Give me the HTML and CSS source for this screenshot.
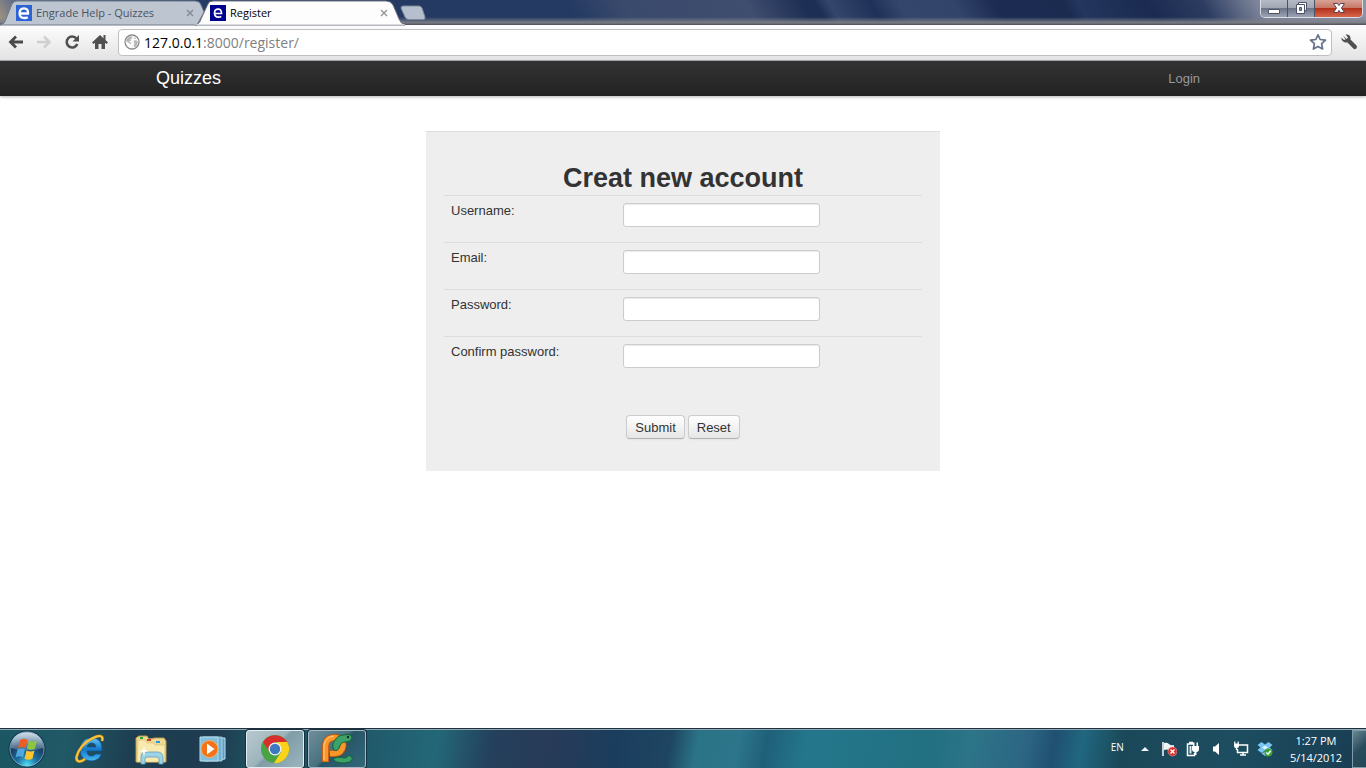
FILE: index.html
```html
<!DOCTYPE html>
<html lang="en">
<head>
<meta charset="utf-8">
<title>Register</title>
<link rel="stylesheet" href="styles.css">
</head>
<body>
<header class="titlebar">
  <div class="tabs" role="tablist">
    <div class="tab tab-idle">
      <svg class="tab-shape" viewBox="0 0 204 25" aria-hidden="true"><path d="M0 25C4 24 5 22 6 19L12 4Q14 1 17 1H195Q200 1 201 5L204 12L197 25Z" fill="#bdc5d1" stroke="#6f7a8c"/></svg>
      <span class="favicon favicon-light"><svg viewBox="0 0 16 16" aria-hidden="true"><path d="M4 8.500H12C12.300 5 10.500 3.300 8 3.300C5.300 3.300 3.600 5.300 3.600 8.200C3.600 11.400 5.500 13 8.300 13C9.800 13 10.900 12.700 11.800 12.200" fill="none" stroke="#fff" stroke-width="2.300"/></svg></span>
      <button class="tab-label" role="tab" type="button">Engrade Help - Quizzes</button>
      <button class="tab-close" type="button" aria-label="Close Engrade Help"><svg viewBox="0 0 8 8"><path d="M1 1L7 7M7 1L1 7" stroke="#858c97" stroke-width="1.500"/></svg></button>
    </div>
    <div class="tab tab-active">
      <svg class="tab-shape" viewBox="0 0 210 25" aria-hidden="true"><path d="M0 25C4 24 5 22 6 19L13 4Q14 1 18 1H191Q196 1 198 5L204 19Q206 24 210 25Z" fill="#fdfdfd" stroke="#717783"/><path d="M0 24.500H210V25H0Z" fill="#fdfdfd"/></svg>
      <span class="favicon favicon-dark"><svg viewBox="0 0 16 16" aria-hidden="true"><path d="M4.500 8.500H11.500C11.600 5.500 10.300 4.200 8.200 4.200C5.800 4.200 4.500 5.900 4.500 8.300C4.500 11 6 12.200 8.500 12.200C9.600 12.200 10.500 12 11.300 11.600" fill="none" stroke="#fff" stroke-width="1.700"/></svg></span>
      <button class="tab-label" role="tab" aria-selected="true" type="button">Register</button>
      <button class="tab-close" type="button" aria-label="Close Register"><svg viewBox="0 0 8 8"><path d="M1 1L7 7M7 1L1 7" stroke="#999" stroke-width="1.500"/></svg></button>
    </div>
    <button class="new-tab" type="button" aria-label="New tab"><svg viewBox="0 0 26 16"><path d="M3 1H19Q21 1 22 3L25 12Q25.500 14.500 23 14.500H9Q6 14.500 5 12L1 3Q1 1 3 1Z" fill="#b6bfcd" stroke="#7c889c"/></svg></button>
  </div>
  <div class="window-buttons">
    <button class="win" type="button" aria-label="Minimize"><svg viewBox="0 0 14 14"><path d="M1.500 8.500H12.500V12.500H1.500Z" fill="#fff" stroke="#4d5468"/></svg></button>
    <button class="win" type="button" aria-label="Restore"><svg viewBox="0 0 14 14"><path d="M4.500 1.500H12.500V9.500H4.500Z" fill="#fff" stroke="#4d5468"/><path d="M2.500 3.500H10.500V12.500H2.500Z" fill="#fff" stroke="#4d5468"/><path d="M5.500 6.500H7.500V9.500H5.500Z" fill="#8d93a3" stroke="#4d5468"/></svg></button>
    <button class="win win-close" type="button" aria-label="Close"><svg viewBox="0 0 14 14"><path d="M1.500 2.500H5.500L7 4.600L8.500 2.500H12.500L9.500 7L12.500 11.500H8.500L7 9.400L5.500 11.500H1.500L4.500 7Z" fill="#fff" stroke="#564550"/></svg></button>
  </div>
</header>

<div class="toolbar">
  <button class="tool" type="button" aria-label="Back"><svg viewBox="0 0 16 16"><path d="M8 2.500L2.500 8L8 13.500M3 8H15" fill="none" stroke="#4a4a4a" stroke-width="2.800"/></svg></button>
  <button class="tool" type="button" aria-label="Forward"><svg viewBox="0 0 16 16"><path d="M8 2.500L13.500 8L8 13.500M13 8H1" fill="none" stroke="#cfcfcf" stroke-width="2.500"/></svg></button>
  <button class="tool" type="button" aria-label="Reload"><svg viewBox="0 0 16 16"><path d="M12.500 4.500A5.500 5.500 0 1 0 13.300 10" fill="none" stroke="#505050" stroke-width="2.600"/><path d="M15 1V7.500H8.500Z" fill="#505050"/></svg></button>
  <button class="tool" type="button" aria-label="Home"><svg viewBox="0 0 16 16"><path d="M8 1L0 8.500L1.500 10L3 8.700V15H6.500V10H9.500V15H13V8.700L14.500 10L16 8.500L13.500 6V1H11.500V4.200Z" fill="#505050"/></svg></button>
  <div class="omnibox">
    <svg class="globe" viewBox="0 0 16 16" aria-hidden="true"><circle cx="8" cy="8" r="7" fill="#fafafa" stroke="#8c8c8c" stroke-width="1.300"/><path d="M2.500 5L5 2.500L8 2.500L8.500 4L6.500 5.500L7 7L5 7L7.500 9.500L6.500 10L3.500 8L2 7ZM9.500 7L12 6L14 8L13 11L11 13.500L9.500 11.500L10.500 9.500ZM10 3L12.500 4.500L10.500 5Z" fill="#b8b8b8"/></svg>
    <span class="url" role="textbox" aria-label="Address">127.0.0.1<span class="url-path">:8000/register/</span></span>
    <button class="star" type="button" aria-label="Bookmark"><svg viewBox="0 0 18 18"><path d="M9 1.800L11.200 6.500L16.500 7.100L12.600 10.700L13.600 16L9 13.400L4.400 16L5.400 10.700L1.500 7.100L6.800 6.500Z" fill="#fff" stroke="#66718a" stroke-width="1.700" stroke-linejoin="round"/></svg></button>
  </div>
  <button class="tool wrench" type="button" aria-label="Settings"><svg viewBox="0 0 16 16"><path d="M2 1.500L5.500 5L7 3.500L4.500 .500C8 0 10 2 9.500 5.500L15.500 11.500Q16.500 13 15.300 14.500Q13.800 15.800 12.300 14.500L6.500 8.500C3 9 .200 7 .500 3.500L3 6L4.500 5.500Z" fill="#505050"/></svg></button>
</div>

<div class="page">
  <nav class="navbar">
    <a class="brand" href="#">Quizzes</a>
    <a class="login" href="#">Login</a>
  </nav>
  <main class="content">
    <form class="panel">
      <h1 class="heading">Creat new account</h1>
      <table class="fields">
        <tr><td class="label-cell"><label for="username">Username:</label></td><td><input class="field" id="username" type="text"></td></tr>
        <tr><td class="label-cell"><label for="email">Email:</label></td><td><input class="field" id="email" type="text"></td></tr>
        <tr><td class="label-cell"><label for="password">Password:</label></td><td><input class="field" id="password" type="password"></td></tr>
        <tr><td class="label-cell"><label for="confirm">Confirm password:</label></td><td><input class="field" id="confirm" type="password"></td></tr>
      </table>
      <div class="actions">
        <button class="btn" type="submit">Submit</button>
        <button class="btn" type="reset">Reset</button>
      </div>
    </form>
  </main>
</div>

<footer class="taskbar">
  <div class="launchers">
    <button class="start" type="button" aria-label="Start">
      <svg viewBox="0 0 40 40"><defs><radialGradient id="orb" cx=".5" cy=".95" r=".85"><stop offset="0" stop-color="#4fe0f5"/><stop offset=".35" stop-color="#1c6f9f"/><stop offset=".7" stop-color="#1b3d63"/><stop offset="1" stop-color="#56799a"/></radialGradient><linearGradient id="shine" x1="0" y1="0" x2="0" y2="1"><stop offset="0" stop-color="#dce9f1" stop-opacity=".9"/><stop offset="1" stop-color="#9bb9cb" stop-opacity=".3"/></linearGradient></defs>
      <circle cx="20" cy="20" r="18" fill="url(#orb)" stroke="#12324a"/><circle cx="20" cy="20" r="17" fill="none" stroke="#a9cbdc" stroke-opacity=".6"/><path d="M4 19C4 8 11 3.500 20 3.500S36 8 36 19Q20 24 4 19Z" fill="url(#shine)"/>
      <path d="M13 11Q17 8.500 20.500 11L18.500 19Q15 17 11 19Z" fill="#ee5b25"/><path d="M22 11.500Q26 14 30 11.500L28 19.500Q24 22 20 19.500Z" fill="#8ec63f"/><path d="M10.500 20.500Q14.500 18.500 18 20.500L16 28.500Q12.500 26 8.500 28.500Z" fill="#4da8e0"/><path d="M19.500 21.500Q23.500 23.500 27.500 21.500L25.500 29.500Q21.500 32 17.500 29.500Z" fill="#fdc52c"/></svg>
    </button>
    <button class="launcher" type="button" aria-label="Internet Explorer">
      <svg viewBox="0 0 36 36"><defs><linearGradient id="ie" x1="0" y1="0" x2="0" y2="1"><stop offset="0" stop-color="#62c6f5"/><stop offset=".5" stop-color="#1378c9"/><stop offset="1" stop-color="#49b8f1"/></linearGradient></defs><path d="M31 20H16Q16 25 20.500 25Q23 25 24.500 23H30.500Q28 30 20 30Q9 29 9 18.500Q10 7 20.500 7Q32 7 31 20ZM16 16H25Q24.500 12 20.500 12Q17 12 16 16Z" fill="url(#ie)" stroke="#0b4e8e" stroke-width=".7"/><path d="M31 10C33 4 28 4 22 7C13 11 7 19 5.500 26C5 31 9 32 14 28" fill="none" stroke="#b77a0b" stroke-width="3"/><path d="M31 10C33 4 28 4 22 7C13 11 7 19 5.500 26C5 31 9 32 14 28" fill="none" stroke="#f8c640" stroke-width="2"/></svg>
    </button>
    <button class="launcher" type="button" aria-label="Windows Explorer">
      <svg viewBox="0 0 36 36"><path d="M3 7L6 5H14L16 8L22 7H31L33 10V31H3Z" fill="#edd894" stroke="#b99a46"/><path d="M5 9H12L14 12H20L22 14H32V31H4Z" fill="#f8e9ae" stroke="#d6bd70" stroke-width=".6"/><path d="M7 6H10V8H7Z" fill="#29a335"/><path d="M14 8H18V10H14Z" fill="#cf3c2b"/><path d="M23 10H27V12H23Z" fill="#2498de"/><path d="M8 33V26Q8 21 13 21H24Q30 21 30 27V33H26V28Q26 26 24 26H14Q12 26 12 28V33Z" fill="#9dd2e7" stroke="#5d9dba" stroke-width=".8"/><path d="M11 15L12 19L16 20L12 21L11 25L10 21L6 20L10 19Z" fill="#fff"/></svg>
    </button>
    <button class="launcher" type="button" aria-label="Windows Media Player">
      <svg viewBox="0 0 36 36"><path d="M12 7H31V28L12 30Z" fill="#5d9fc4" stroke="#bde0ee"/><path d="M9 6H28V30H9Z" fill="#6eb0d2" stroke="#bde0ee" stroke-width=".8"/><path d="M6 6H24V30H6Z" fill="#80bfdd" stroke="#b7dcec"/><circle cx="15.500" cy="18" r="8.500" fill="#f27318" stroke="#fbaf67"/><path d="M13 12.500L20.500 18L13 23.500Z" fill="#fff"/></svg>
    </button>
    <button class="task task-active" type="button" aria-label="Chrome">
      <svg viewBox="0 0 32 32"><circle cx="16" cy="16" r="14" fill="#4aa343"/><path d="M4 9A14 14 0 0 1 28.100 9H16L10 18Z" fill="#d92e2b"/><path d="M28.100 9A14 14 0 0 1 15 30L22 19L18 9Z" fill="#fdd21b"/><circle cx="16" cy="16" r="6.500" fill="#f3f6f8"/><circle cx="16" cy="16" r="5.200" fill="#3e78bd"/></svg>
    </button>
    <button class="task" type="button" aria-label="PyCharm">
      <svg viewBox="0 0 32 32"><path d="M4 29V14Q4 4 14 4Q24 4 24 13.500Q24 23 14 23H10V28Z" fill="none" stroke="none"/><path d="M4.500 29V13Q5 4.500 14 4.500Q22 5 22 12.500Q21 20.500 13 20.500H9" fill="none" stroke="#b9500f" stroke-width="7"/><path d="M4.500 28.500V13Q5 4.500 14 4.500Q22 5 22 12.500Q21 20.500 13 20.500H9" fill="none" stroke="#fb9728" stroke-width="5.500"/><path d="M3 27V12Q5 3.500 13 3" fill="none" stroke="#ffcf86"/><path d="M13 17Q10 12 14 7Q17 2 23 2Q30 0 31 4.500Q30 9 24 9Q20 9 18.500 14Q16.500 19 13 17Z" fill="#3ca268" stroke="#12633c"/><path d="M12 26Q16 23 21 24.500Q26 26 27 22.500Q32 23 31 27Q29 30 23 30Q14 30 12 26Z" fill="#3ca268" stroke="#12633c"/><circle cx="27" cy="4" r="1.200" fill="#102b1b"/></svg>
    </button>
  </div>
  <div class="tray">
    <span class="lang">EN</span>
    <svg class="tray-icon" viewBox="0 0 16 16" aria-hidden="true"><path d="M4 10L8 6L12 10Z" fill="#eef5f7"/></svg>
    <svg class="tray-icon" viewBox="0 0 16 16" aria-hidden="true"><path d="M2 1V15" stroke="#fff" stroke-width="1.500"/><path d="M3 2Q6 1 8 3Q10 5 13 4V10Q10 11 8 9Q6 8 3 9Z" fill="#eef3f5"/><circle cx="11.500" cy="10.500" r="4.500" fill="#d92f2d" stroke="#f2b0a9" stroke-width=".5"/><path d="M9.500 8.500L13.500 12.500M13.500 8.500L9.500 12.500" stroke="#fff" stroke-width="1.400"/></svg>
    <svg class="tray-icon" viewBox="0 0 16 16" aria-hidden="true"><path d="M8 3H2.500V14.500H9.500V12M4 1.500H8" fill="none" stroke="#fff" stroke-width="1.500"/><path d="M4.500 5H6.500V12.500H4.500Z" fill="#dce7eb"/><path d="M7 5H14V8Q14 11 11.500 11V14H9.500V11Q7 11 7 8ZM8 1.500H9.500V5H8ZM11.500 1.500H13V5H11.500Z" fill="#fff"/></svg>
    <svg class="tray-icon" viewBox="0 0 16 16" aria-hidden="true"><path d="M4 5.500H6L10 2V14L6 10.500H4Z" fill="#fff"/></svg>
    <svg class="tray-icon" viewBox="0 0 16 16" aria-hidden="true"><path d="M6 4H14.500V11.500H4.500V8M7 14H13M10 12V14" fill="none" stroke="#fff" stroke-width="1.500"/><path d="M1 2.500H6V5Q6 7 4.200 7V9H2.800V7Q1 7 1 5ZM1.200 .500H2.400V3H1.200ZM4.600 .500H5.800V3H4.600Z" fill="#fff"/></svg>
    <svg class="tray-icon" viewBox="0 0 16 16" aria-hidden="true"><path d="M4.500 1L8 3.500L3.500 6.500L.500 4ZM11.500 1L15.500 4L12.500 6.500L8 3.500ZM3.500 6.500L8 9.500L4.500 12L.500 9ZM12.500 6.500L15.500 9L11.500 12L8 9.500ZM8 3.500L12.500 6.500L8 9.500L3.500 6.500Z" fill="#78c6f4"/><path d="M8 4.500L11 6.500L8 8.500L5 6.500Z" fill="#dff2fd"/><path d="M8 10.500L11 12.500L8 15L4.500 12.500Z" fill="#78c6f4"/><circle cx="11.500" cy="11.500" r="4" fill="#3ca32f"/><path d="M9.300 11.500L11 13.200L13.700 9.800" fill="none" stroke="#fff" stroke-width="1.500"/></svg>
    <div class="clock"><span>1:27 PM</span><span>5/14/2012</span></div>
    <button class="show-desktop" type="button" aria-label="Show desktop"></button>
  </div>
</footer>
</body>
</html>
```
FILE: styles.css
```css
* { box-sizing: border-box; }
body {
  margin: 0;
  min-height: 100vh;
  display: flex;
  flex-direction: column;
  background: #fff;
  font-family: "Liberation Sans", Arial, sans-serif;
  font-size: 13px;
  color: #333;
}
button { padding: 0; border: 0; background: none; font: inherit; color: inherit; }
svg { display: block; }

/* Title bar */
.titlebar {
  display: flex;
  justify-content: space-between;
  align-items: flex-start;
  height: 25px;
  background:
    linear-gradient(transparent 17px, #7c7f86 23px, #55585f 24px),
    linear-gradient(60deg, #a89880 0, #5e6c87 2%, #253b63 16%, #243a62 42%, #3a4a6c 46%, #3f4d6e 55%, #1e2f55 59%, #1e2f55 60%, #35466c 61%, #1f3158 64%, #35466c 66%, #33446b 70%, #1b2b52 73%, #1b2b50 78%, #24365e 79%, #1a2a50 84%, #2c3c61 88%, #7d859b 92%, #8d95a8 100%);
  font-family: "Open Sans", "Noto Sans", sans-serif;
  font-size: 11px;
}
.tabs { display: flex; height: 25px; }
.tab {
  position: relative;
  display: flex;
  align-items: center;
  gap: 4px;
  height: 25px;
}
.tab-idle { width: 197px; padding: 0 3px 0 16px; margin-right: -2px; color: #4c535f; }
.tab-active { width: 205px; padding: 0 12px 0 15px; color: #000; }
.tab-shape { position: absolute; left: 0; top: 0; height: 25px; overflow: visible; }
.favicon { position: relative; width: 16px; height: 16px; }
.favicon-light { background: #2b63d6; }
.favicon-dark { background: #00008f; }
.tab-label { position: relative; flex: 1; text-align: left; white-space: nowrap; }
.tab-close { position: relative; width: 8px; height: 8px; }
.new-tab { width: 26px; height: 16px; margin-top: 5px; }
.window-buttons {
  display: flex;
  height: 18px;
  margin-right: 3px;
  border: 1px solid #dadde4;
  border-top: 0;
  border-radius: 0 0 5px 5px;
  overflow: hidden;
}
.win {
  display: flex;
  justify-content: center;
  width: 27px;
  padding-top: 1px;
  border-right: 1px solid #4c5367;
  background: linear-gradient(#b5bac5 0, #a0a6b4 45%, #6c7488 50%, #9ba3b5 100%);
}
.win svg { width: 14px; height: 14px; }
.win-close { width: 47px; border-right: 0; background: linear-gradient(#d7a295 0, #c77867 45%, #b3321b 50%, #d7664b 100%); }

/* Browser toolbar */
.toolbar {
  display: flex;
  align-items: center;
  gap: 12px;
  height: 36px;
  padding: 0 9px 1px 8px;
  border-bottom: 1px solid #a9abb3;
  background: linear-gradient(#fdfdfd, #e3e3e3);
}
.tool { width: 16px; height: 16px; }
.omnibox {
  flex: 1;
  display: flex;
  align-items: center;
  gap: 4px;
  height: 27px;
  margin: 0 -3px 0 -2px;
  padding: 0 4px 0 5px;
  border: 1px solid #bfbfbf;
  border-radius: 4px;
  background: #fff;
}
.globe { width: 16px; height: 16px; }
.url { flex: 1; font-family: "Open Sans", "Noto Sans", sans-serif; font-size: 14px; color: #000; }
.url-path { color: #808080; }
.star, .star svg { width: 18px; height: 18px; }

/* Web page */
.page { flex: 1; display: flex; flex-direction: column; }
.navbar {
  display: flex;
  justify-content: space-between;
  align-items: center;
  height: 35px;
  padding: 0 166px 0 156px;
  background: linear-gradient(#333, #222);
  box-shadow: 0 1px 3px rgba(0, 0, 0, .3);
}
.brand { padding-bottom: 2px; font-size: 18px; line-height: 20px; color: #fff; text-decoration: none; }
.login { font-size: 13px; color: #999; text-decoration: none; }
.content { display: flex; justify-content: center; padding: 35px 20px; }
.panel {
  width: 514px;
  padding: 30px 18px 32px;
  border-top: 1px solid #ddd;
  background: #eee;
}
.heading { margin: 0; font-size: 27px; line-height: 33px; text-align: center; }
.fields { width: 100%; border-collapse: collapse; }
.fields td { padding: 7px 7px 15px; border-top: 1px solid #ddd; vertical-align: top; }
.fields .label-cell { width: 172px; }
.fields label { display: block; font-size: 13px; line-height: 16px; }
.field {
  display: block;
  width: 197px;
  height: 24px;
  padding: 3px;
  border: 1px solid #ccc;
  border-radius: 3px;
  background: #fff;
  box-shadow: inset 0 1px 1px rgba(0, 0, 0, .08);
}
.actions { display: flex; justify-content: center; gap: 3px; padding-top: 32px; }
.btn {
  height: 24px;
  padding: 0 8px;
  border: 1px solid #ccc;
  border-bottom-color: #b3b3b3;
  border-radius: 4px;
  background: linear-gradient(#fff, #e6e6e6);
  box-shadow: 0 1px 2px rgba(0, 0, 0, .05);
  font-size: 13px;
}

/* Taskbar */
.taskbar {
  display: flex;
  justify-content: space-between;
  height: 40px;
  border-top: 1px solid #20303f;
  box-shadow: inset 0 1px #8fa9b5;
  background: linear-gradient(100deg, #1b5663 0, #215966 5%, #1d3d50 10%, #1f3c50 16%, #1e5361 19%, #20596a 27%, #236878 32%, #24405c 36%, #283b58 40%, #1b3d5d 45%, #1e4562 49%, #2b7487 51%, #2c758a 54%, #1f6079 56%, #24778b 59%, #227082 68%, #2d7488 71%, #2c6583 75%, #205072 77%, #20677f 79%, #1b4859 82%, #1d4d60 90%, #193d53 100%);
}
.launchers { display: flex; align-items: center; }
.start { width: 40px; height: 40px; margin: 0 24px 0 7px; }
.launcher { width: 36px; height: 36px; margin-right: 26px; }
.launcher + .launcher { margin-right: 25px; }
.launcher + .launcher + .launcher { margin-right: 16px; }
.task {
  display: flex;
  align-items: center;
  justify-content: center;
  width: 58px;
  height: 38px;
  margin-right: 4px;
  border: 1px solid #a7bac4;
  border-radius: 3px;
  background: linear-gradient(135deg, #6f8e9a 0, #48717f 45%, #285567 50%, #31697a 100%);
  box-shadow: 0 0 0 1px #17303f;
}
.task svg { width: 32px; height: 32px; }
.task-active { border-color: #e4edf0; background: linear-gradient(135deg, #b8c9cf 0, #9db4bd 45%, #7f9ca7 50%, #9bb5bd 100%); }
.tray {
  display: flex;
  align-items: center;
  gap: 8px;
  color: #fff;
  font-family: "Open Sans", "Noto Sans", sans-serif;
  font-size: 11px;
}
.lang { margin-right: 5px; padding-bottom: 4px; font-size: 10px; }
.tray-icon { width: 16px; height: 16px; }
.clock { display: flex; flex-direction: column; align-items: center; margin: 0 2px 0 9px; line-height: 17px; }
.show-desktop {
  align-self: stretch;
  width: 14px;
  margin-top: 1px;
  border: 1px solid #7e9ba6;
  border-right: 0;
  background: linear-gradient(135deg, #6a8895, #2a4d5e 50%, #234757);
}
```
